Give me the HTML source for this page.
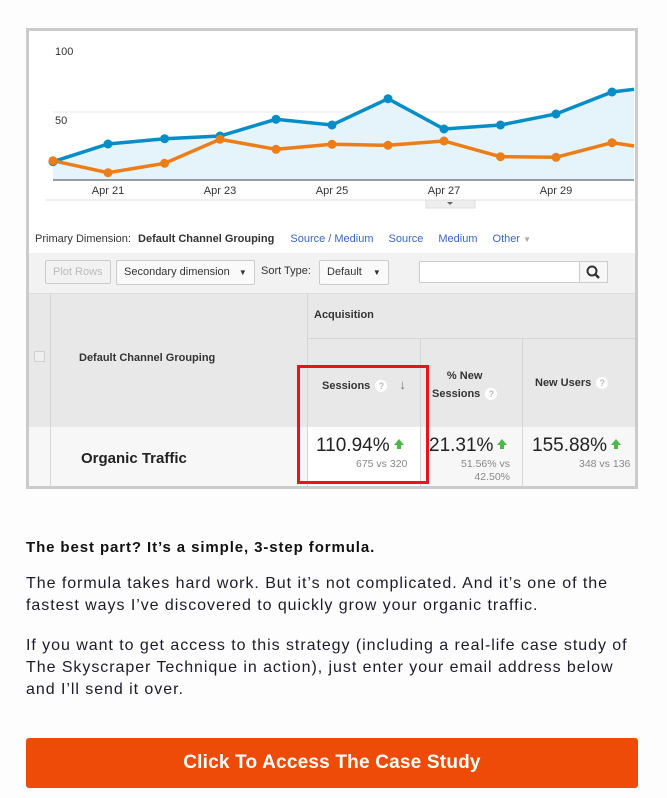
<!DOCTYPE html>
<html><head><meta charset="utf-8"><style>
*{margin:0;padding:0;box-sizing:border-box}
body{width:667px;height:798px;background:#fdfdfd;font-family:"Liberation Sans",Arial,sans-serif;position:relative;overflow:hidden}
.frame{position:absolute;left:26px;top:28px;width:612px;height:461px;border:3px solid #cbcbcb;background:#fff;overflow:hidden}
.abs{position:absolute}
.t{position:absolute;font-size:11px;color:#333;white-space:nowrap}
.lnk{color:#3a66c4}
.box{position:absolute;border:1px solid #ccc;border-radius:2px;background:#f7f7f7;font-size:11px;color:#333;padding:0 7px;line-height:22px}
.q{display:inline-block;width:12px;height:12px;border-radius:6px;background:#fff;color:#bbb;font-size:9px;text-align:center;line-height:12px;vertical-align:middle;margin-left:5px}
.up{display:inline-block;width:0;height:0;border-left:5px solid transparent;border-right:5px solid transparent;border-bottom:6px solid #4cb848;position:relative;vertical-align:middle;margin-left:4px;top:-4px}
.up:after{content:"";position:absolute;left:-2px;top:6px;width:4px;height:4px;background:#4cb848}
p{position:absolute;left:26px;width:640px;font-size:16px;line-height:22px;color:#1c1c28;letter-spacing:0.95px;white-space:nowrap}
</style></head><body>
<div class="frame">
<svg class="abs" style="left:-29px;top:-31px" width="667" height="220">
<line x1="53" y1="112" x2="634" y2="112" stroke="#e8e8e8"/>
<polygon points="53,161.7 108,144 164.6,138.7 220,136 276,119.3 332,125 388,98.7 444,129 500.5,125 556,114 612,92 634,89.3 634,180 53,180" fill="#e5f3fa"/>
<line x1="53" y1="180" x2="634" y2="180" stroke="#666" stroke-width="1.2"/>
<line x1="46" y1="200" x2="634" y2="200" stroke="#ddd"/>
<rect x="426" y="200" width="49" height="8" fill="#eee" stroke="#ddd"/>
<polygon points="447,202 453,202 450,205" fill="#666"/>
<polyline points="53,161.7 108,144 164.6,138.7 220,136 276,119.3 332,125 388,98.7 444,129 500.5,125 556,114 612,92 634,89.3" fill="none" stroke="#058dc7" stroke-width="3.5"/>
<polyline points="53,160.7 108,172.7 164.6,163.3 220,139.3 276,149.3 332,144.3 388,145.3 444,141 500.5,156.7 556,157.3 612,142.7 634,146" fill="none" stroke="#ed7e17" stroke-width="3.5"/>
<g fill="#058dc7"><circle cx="53" cy="161.7" r="4.5"/><circle cx="108" cy="144" r="4.5"/><circle cx="164.6" cy="138.7" r="4.5"/><circle cx="220" cy="136" r="4.5"/><circle cx="276" cy="119.3" r="4.5"/><circle cx="332" cy="125" r="4.5"/><circle cx="388" cy="98.7" r="4.5"/><circle cx="444" cy="129" r="4.5"/><circle cx="500.5" cy="125" r="4.5"/><circle cx="556" cy="114" r="4.5"/><circle cx="612" cy="92" r="4.5"/></g>
<g fill="#ed7e17"><circle cx="53" cy="160.7" r="4.5"/><circle cx="108" cy="172.7" r="4.5"/><circle cx="164.6" cy="163.3" r="4.5"/><circle cx="220" cy="139.3" r="4.5"/><circle cx="276" cy="149.3" r="4.5"/><circle cx="332" cy="144.3" r="4.5"/><circle cx="388" cy="145.3" r="4.5"/><circle cx="444" cy="141" r="4.5"/><circle cx="500.5" cy="156.7" r="4.5"/><circle cx="556" cy="157.3" r="4.5"/><circle cx="612" cy="142.7" r="4.5"/></g>
<g font-family="Liberation Sans,Arial" font-size="11" fill="#333"><text x="55" y="55">100</text><text x="55" y="124">50</text>
<g text-anchor="middle"><text x="108" y="194">Apr 21</text><text x="220" y="194">Apr 23</text><text x="332" y="194">Apr 25</text><text x="444" y="194">Apr 27</text><text x="556" y="194">Apr 29</text></g></g>
</svg>
<div class="t" style="left:6px;top:202px">Primary Dimension: <b style="margin-left:4px">Default Channel Grouping</b> <span class="lnk" style="margin-left:13px">Source / Medium</span><span class="lnk" style="margin-left:15px">Source</span><span class="lnk" style="margin-left:15px">Medium</span><span class="lnk" style="margin-left:15px">Other</span> <span style="color:#aaa;font-size:8px">▼</span></div>
<div class="abs" style="left:0;top:222px;width:612px;height:40px;background:#f2f2f2"></div>
<div class="box" style="left:16px;top:229px;color:#bbb;background:#f2f2f2">Plot Rows</div>
<div class="box" style="left:87px;top:229px;background:#fafafa">Secondary dimension <span style="font-size:8px;margin-left:6px">▼</span></div>
<div class="t" style="left:232px;top:234px">Sort Type:</div>
<div class="box" style="left:290px;top:229px;background:#fafafa">Default <span style="font-size:8px;margin-left:8px">▼</span></div>
<div class="abs" style="left:390px;top:230px;width:189px;height:22px;border:1px solid #ccc;background:#fff"></div>
<div class="abs" style="left:550px;top:230px;width:29px;height:22px;border:1px solid #ccc;background:#f7f7f7"><svg width="27" height="20"><circle cx="12" cy="9" r="4.5" fill="none" stroke="#333" stroke-width="2"/><line x1="15" y1="12" x2="19" y2="16" stroke="#333" stroke-width="2.5"/></svg></div>
<div class="abs" style="left:0;top:262px;width:612px;height:134px;background:#e8e8e8;border-top:1px solid #ddd"></div>
<div class="abs" style="left:0;top:396px;width:612px;height:70px;background:#f7f7f7"></div>
<div class="abs" style="left:278px;top:396px;width:113px;height:70px;background:#fff"></div>
<div class="abs" style="left:21px;top:262px;width:1px;height:200px;background:#d6d6d6"></div>
<div class="abs" style="left:278px;top:262px;width:1px;height:200px;background:#d6d6d6"></div>
<div class="abs" style="left:278px;top:307px;width:334px;height:1px;background:#d6d6d6"></div>
<div class="abs" style="left:391px;top:307px;width:1px;height:155px;background:#d6d6d6"></div>
<div class="abs" style="left:493px;top:307px;width:1px;height:155px;background:#d6d6d6"></div>
<div class="abs" style="left:5px;top:320px;width:11px;height:11px;border:1px solid #d0d0d0;background:#eee"></div>
<div class="t" style="left:50px;top:321px;font-weight:bold">Default Channel Grouping</div>
<div class="t" style="left:285px;top:278px;font-weight:bold">Acquisition</div>
<div class="t" style="left:293px;top:346px;font-weight:bold">Sessions<span class="q">?</span><span style="margin-left:12px;color:#777;font-size:13px">↓</span></div>
<div class="t" style="left:403px;top:336px;font-weight:bold;text-align:center;line-height:18px">% New<br>Sessions<span class="q">?</span></div>
<div class="t" style="left:506px;top:346px;font-weight:bold">New Users<span class="q">?</span></div>
<div class="t" style="left:52px;top:419px;font-size:15px;font-weight:bold;color:#222">Organic Traffic</div>
<div class="t" style="left:287px;top:404px;font-size:19px;color:#222">110.94%<span class="up"></span></div>
<div class="t" style="left:327px;top:427px;color:#888;font-size:10.5px">675 vs 320</div>
<div class="t" style="left:400px;top:404px;font-size:19px;color:#222">21.31%<span class="up"></span></div>
<div class="t" style="left:432px;top:427px;color:#888;font-size:10.5px;text-align:right;line-height:13px">51.56% vs<br>42.50%</div>
<div class="t" style="left:503px;top:404px;font-size:19px;color:#222">155.88%<span class="up"></span></div>
<div class="t" style="left:550px;top:427px;color:#888;font-size:10.5px">348 vs 136</div>
</div>
<div class="abs" style="left:297px;top:365px;width:132px;height:119px;border:3px solid #e8141b"></div>
<p style="top:537px;font-weight:bold;font-size:15px;letter-spacing:0.9px;color:#111">The best part? It’s a simple, 3-step formula.</p>
<p style="top:573px">The formula takes hard work. But it’s not complicated. And it’s one of the<br>fastest ways I’ve discovered to quickly grow your organic traffic.</p>
<p style="top:635px">If you want to get access to this strategy (including a real-life case study of<br>The Skyscraper Technique in action), just enter your email address below<br>and I’ll send it over.</p>
<div class="abs" style="left:26px;top:738px;width:612px;height:50px;background:#ee4b09;border-radius:3px;color:#fff;font-weight:bold;font-size:19px;letter-spacing:0.2px;text-align:center;line-height:50px">Click To Access The Case Study</div>
</body></html>
